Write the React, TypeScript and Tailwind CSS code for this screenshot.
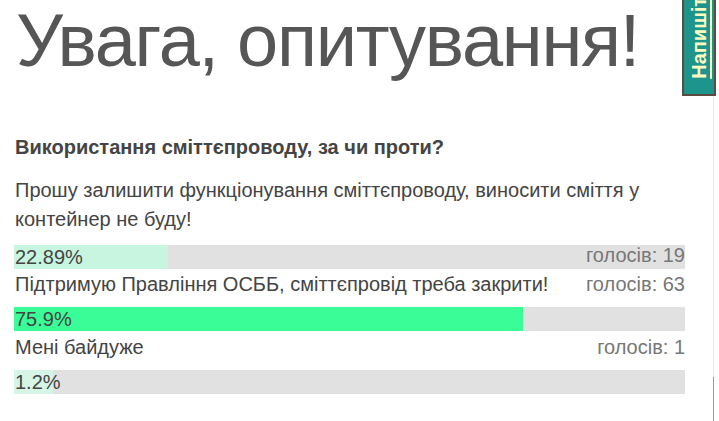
import React from "react";

const items = [
  { text: "Прошу залишити функціонування сміттєпроводу, виносити сміття у контейнер не буду!", votes: 19, pct: "22.89%", fill: 154, color: "#c8f5e0", votesInBar: true, tmt: "mt-0", bmt: "mt-[11px]" },
  { text: "Підтримую Правління ОСББ, сміттєпровід треба закрити!", votes: 63, pct: "75.9%", fill: 509, color: "#3bfd98", votesInBar: false, tmt: "mt-[1px]", bmt: "mt-[8px]" },
  { text: "Мені байдуже", votes: 1, pct: "1.2%", fill: 39, color: "#d6f5e6", votesInBar: false, tmt: "mt-[2px]", bmt: "mt-[8px]" },
];

export default function App() {
  return (
    <div className="relative w-[719px] h-[421px] overflow-hidden bg-white flex" style={{ fontFamily: '"Liberation Sans", Arial, sans-serif' }}>
      <div className="w-[713px] h-full">
        <div className="pl-[14px] w-[685px]">
          <h1 className="text-[74px] leading-none tracking-[-1.3px] text-[#565656] pt-[4px] pl-[2px] font-normal">Увага, опитування!</h1>
          <div className="mt-[59px] text-[20px] font-bold text-[#444] leading-[20px] pl-[1px]">Використання сміттєпроводу, за чи проти?</div>
          <div className="mt-[19px] text-[#444]">
            {items.map((it, i) => (
              <div key={i} className="flex flex-col">
                {it.votesInBar ? (
                  <div className="text-[20px] leading-[29px] pr-[20px] pl-[1px]">{it.text}</div>
                ) : (
                  <div className={"flex justify-between text-[20px] leading-[29px] pl-[1px] " + it.tmt}>
                    <span>{it.text}</span>
                    <span className="text-[#777]">голосів: {it.votes}</span>
                  </div>
                )}
                <div className={"flex h-[24px] bg-[#e1e1e1] " + it.bmt}>
                  <div className="h-full shrink-0 whitespace-nowrap text-[20px] leading-[24px] text-[#444] pl-[1px]" style={{ width: it.fill, background: it.color }}>
                    {it.pct}
                  </div>
                  {it.votesInBar && (
                    <div className="flex-1 text-right text-[20px] leading-[20px] text-[#777]">голосів: {it.votes}</div>
                  )}
                </div>
              </div>
            ))}
          </div>
        </div>
      </div>
      <div className="w-[1px] h-full flex flex-col">
        <div className="flex-1 bg-[#e8e8e8]"></div>
        <div className="h-[44px] bg-[#9a9a9a]"></div>
      </div>
      <div className="absolute left-[682px] top-[-4px] w-[34px] h-[100px] bg-[#1d948c] border-2 border-[#5d4a40] flex flex-col justify-end items-center overflow-hidden pb-[15px]">
        <span className="[writing-mode:vertical-rl] rotate-180 whitespace-nowrap font-bold text-[20px] leading-[22px] text-[#fdfcc0] underline [text-underline-position:left]">Напишіть нам</span>
      </div>
    </div>
  );
}
